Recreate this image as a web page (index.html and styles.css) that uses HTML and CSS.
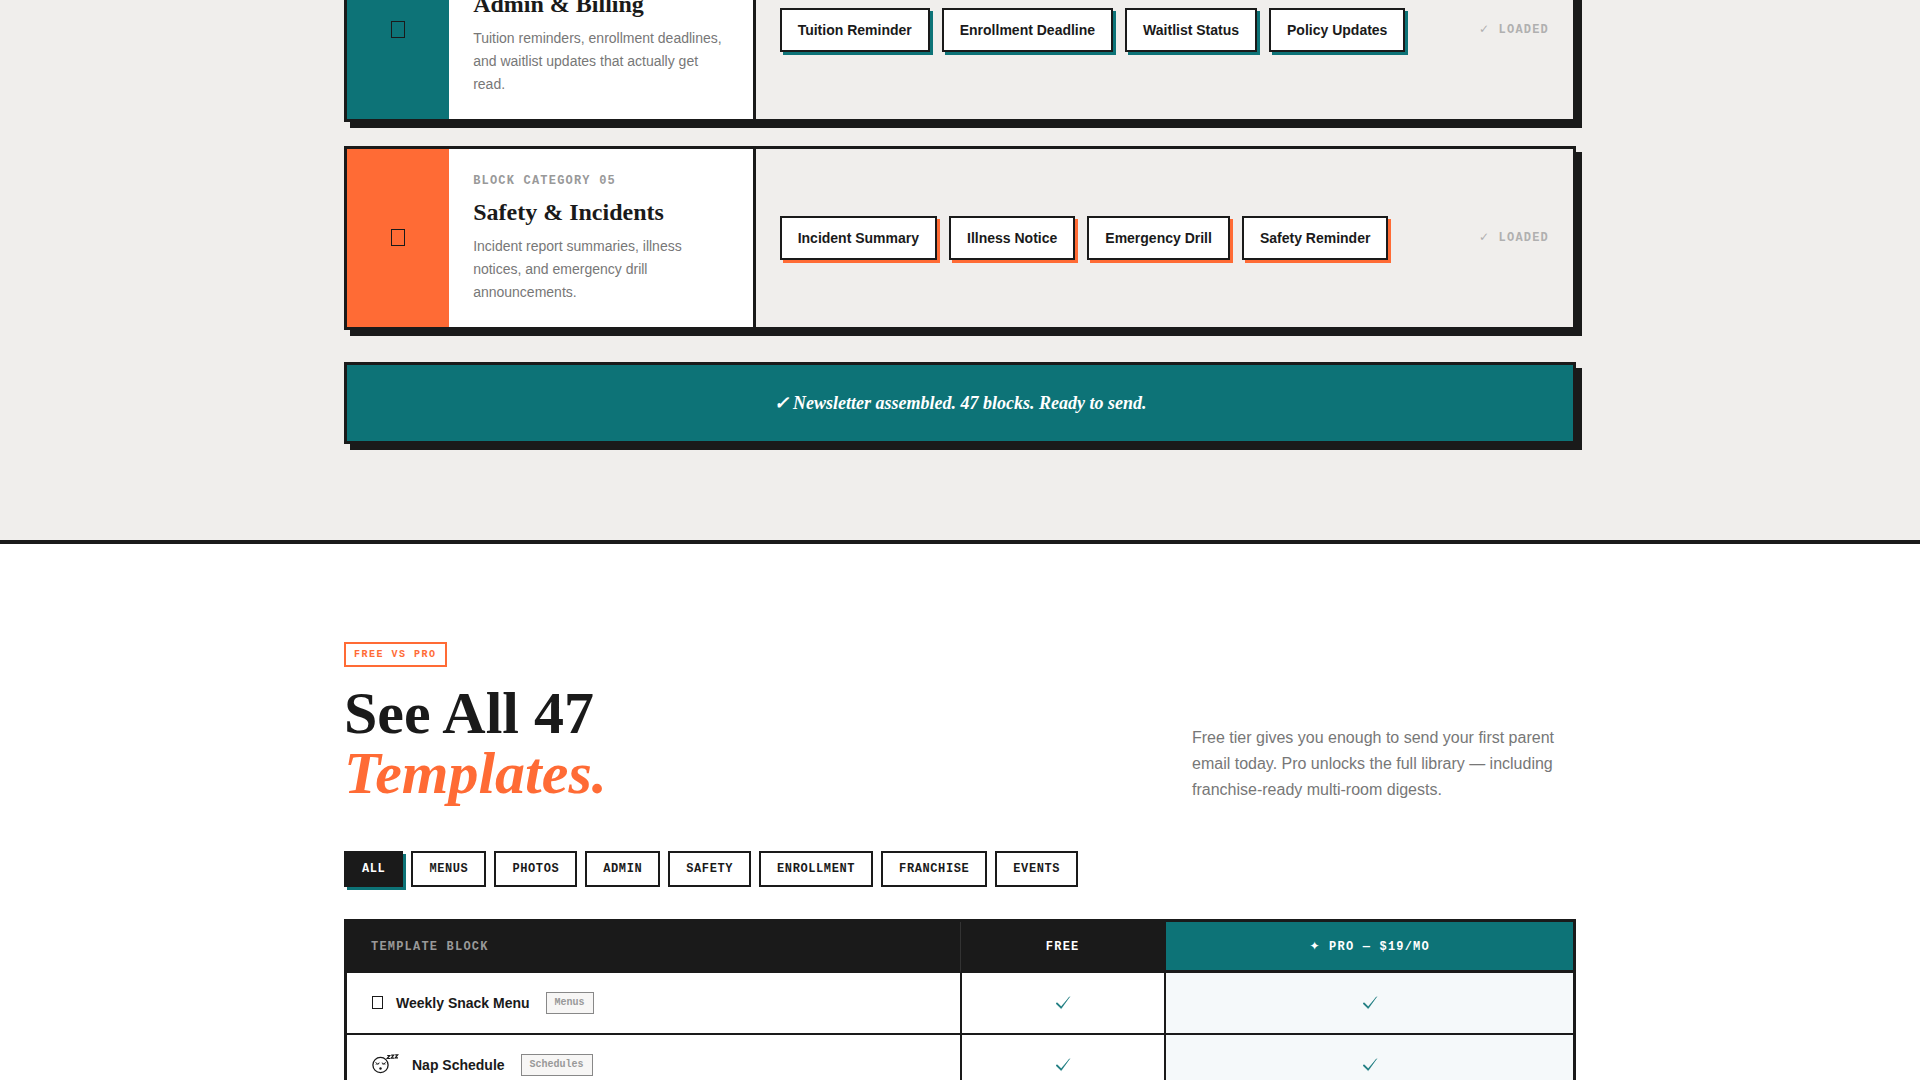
FILE: index.html
```html
<!DOCTYPE html>
<html lang="en">
<head>
<meta charset="utf-8">
<meta name="viewport" content="width=device-width, initial-scale=1">
<title>Newsletter Blocks</title>
<link rel="stylesheet" href="styles.css">
</head>
<body>
<section class="blocks">
  <div class="container">
    <div class="block-list">
      <article class="block block-teal">
        <div class="block-icon"><svg width="14" height="18" viewBox="0 0 14 18" aria-hidden="true"><rect x="0.5" y="0.5" width="13" height="16" fill="none" stroke="currentColor"/></svg></div>
        <div class="block-info">
          <p class="block-label">Block Category 04</p>
          <h3 class="block-title">Admin &amp; Billing</h3>
          <p class="block-desc">Tuition reminders, enrollment deadlines, and waitlist updates that actually get read.</p>
        </div>
        <div class="block-body">
          <ul class="chips">
            <li class="chip">Tuition Reminder</li>
            <li class="chip">Enrollment Deadline</li>
            <li class="chip">Waitlist Status</li>
            <li class="chip">Policy Updates</li>
          </ul>
          <span class="loaded"><span class="sym">✓</span> Loaded</span>
        </div>
      </article>
      <article class="block block-orange">
        <div class="block-icon"><svg width="14" height="18" viewBox="0 0 14 18" aria-hidden="true"><rect x="0.5" y="0.5" width="13" height="16" fill="none" stroke="currentColor"/></svg></div>
        <div class="block-info">
          <p class="block-label">Block Category 05</p>
          <h3 class="block-title">Safety &amp; Incidents</h3>
          <p class="block-desc">Incident report summaries, illness notices, and emergency drill announcements.</p>
        </div>
        <div class="block-body">
          <ul class="chips">
            <li class="chip">Incident Summary</li>
            <li class="chip">Illness Notice</li>
            <li class="chip">Emergency Drill</li>
            <li class="chip">Safety Reminder</li>
          </ul>
          <span class="loaded"><span class="sym">✓</span> Loaded</span>
        </div>
      </article>
    </div>
    <p class="assembled">✓ Newsletter assembled. 47 blocks. Ready to send.</p>
  </div>
</section>

<section class="templates">
  <div class="container">
    <header class="templates-head">
      <div>
        <span class="eyebrow">Free vs Pro</span>
        <h2 class="headline">See All 47<br><em>Templates.</em></h2>
      </div>
      <p class="lede">Free tier gives you enough to send your first parent email today. Pro unlocks the full library — including franchise-ready multi-room digests.</p>
    </header>
    <div class="filters">
      <button type="button" class="filter active">All</button>
      <button type="button" class="filter">Menus</button>
      <button type="button" class="filter">Photos</button>
      <button type="button" class="filter">Admin</button>
      <button type="button" class="filter">Safety</button>
      <button type="button" class="filter">Enrollment</button>
      <button type="button" class="filter">Franchise</button>
      <button type="button" class="filter">Events</button>
    </div>
    <table class="compare">
      <colgroup><col class="col-name"><col class="col-free"><col class="col-pro"></colgroup>
      <thead>
        <tr><th scope="col" class="th-name">Template Block</th><th scope="col" class="th-free">Free</th><th scope="col" class="th-pro"><span class="sym">✦</span> Pro — $19/mo</th></tr>
      </thead>
      <tbody>
        <tr>
          <td><div class="template"><svg class="template-icon" width="13" height="14" viewBox="0 0 13 14" aria-hidden="true"><rect x="1.5" y="0.5" width="10" height="12" fill="none" stroke="currentColor"/></svg><span class="template-name">Weekly Snack Menu</span><span class="tag">Menus</span></div></td>
          <td class="mark"><svg class="check" width="16" height="14" viewBox="0 0 16 14" role="img" aria-label="Included"><path d="M1 7.500L6.200 12.600L14.700 0.700L6.200 10.800L2.200 6.700Z" fill="currentColor" stroke="currentColor" stroke-width=".5"/></svg></td>
          <td class="mark pro"><svg class="check" width="16" height="14" viewBox="0 0 16 14" role="img" aria-label="Included"><path d="M1 7.500L6.200 12.600L14.700 0.700L6.200 10.800L2.200 6.700Z" fill="currentColor" stroke="currentColor" stroke-width=".5"/></svg></td>
        </tr>
        <tr>
          <td><div class="template"><svg class="template-icon" width="29" height="22" viewBox="0 0 29 22" fill="none" stroke="currentColor" aria-hidden="true"><circle cx="9.500" cy="11" r="7.600" stroke-width="1.300"/><path d="M4.500 8.500q2 2.600 4 .4M10.800 8.900q2 2.200 4-.4"/><path d="M5 10.800l.4-1M7 10.800l-.2-1M12 10.800l.2-1M14 10.800l-.4-1" stroke-width=".8"/><circle cx="9.500" cy="14.500" r="1.200" fill="currentColor" stroke="none"/><path d="M16.200 1.500h2.500l-2.500 3h2.800M20.200 1.200h2.500l-2.500 3h2.800M24.200 .9h2.500l-2.500 3h2.800" stroke-width="1.200"/></svg><span class="template-name">Nap Schedule</span><span class="tag">Schedules</span></div></td>
          <td class="mark"><svg class="check" width="16" height="14" viewBox="0 0 16 14" role="img" aria-label="Included"><path d="M1 7.500L6.200 12.600L14.700 0.700L6.200 10.800L2.200 6.700Z" fill="currentColor" stroke="currentColor" stroke-width=".5"/></svg></td>
          <td class="mark pro"><svg class="check" width="16" height="14" viewBox="0 0 16 14" role="img" aria-label="Included"><path d="M1 7.500L6.200 12.600L14.700 0.700L6.200 10.800L2.200 6.700Z" fill="currentColor" stroke="currentColor" stroke-width=".5"/></svg></td>
        </tr>
      </tbody>
    </table>
  </div>
</section>
</body>
</html>
```
FILE: styles.css
```css
:root {
  --ink: #1a1a1a;
  --teal: #0d7377;
  --orange: #ff6b35;
  --paper: #f0eeec;
  --sans: "Liberation Sans", Arial, sans-serif;
  --serif: "Liberation Serif", "Times New Roman", serif;
  --mono: "Liberation Mono", "Courier New", monospace;
}

* { box-sizing: border-box; margin: 0; padding: 0; }

html { scrollbar-width: none; }

body {
  font-family: var(--sans);
  font-size: 16px;
  color: var(--ink);
  background: #fff;
  overflow-x: hidden;
}

.container {
  max-width: 1280px;
  margin: 0 auto;
  padding: 0 24px;
}

.blocks {
  background: var(--paper);
  border-bottom: 4px solid var(--ink);
  padding-bottom: 96px;
  overflow: hidden;
}

.block-list {
  display: grid;
  gap: 24px;
  margin-top: -62px;
}

.block {
  display: grid;
  grid-template-columns: 1fr 3fr 8fr;
  border: 3px solid var(--ink);
  box-shadow: 6px 6px 0 var(--ink);
}

.block-teal { --accent: var(--teal); }
.block-orange { --accent: var(--orange); }

.block-icon {
  display: flex;
  align-items: center;
  justify-content: center;
  background: var(--accent);
}

.block-info {
  background: #fff;
  border-right: 3px solid var(--ink);
  padding: 24px 24px 23px;
}

.block-label {
  font: bold 12px/16px var(--mono);
  letter-spacing: 0.1em;
  text-transform: uppercase;
  color: #999;
  margin-bottom: 8px;
}

.block-title {
  font: bold 24px/30px var(--serif);
  margin-bottom: 8px;
}

.block-desc {
  font-size: 14px;
  line-height: 23px;
  color: #777;
}

.block-body {
  display: flex;
  align-items: center;
  justify-content: space-between;
  gap: 24px;
  padding: 24px;
}

.chips {
  display: flex;
  flex-wrap: wrap;
  gap: 12px;
  list-style: none;
}

.chip {
  background: #fff;
  border: 2px solid var(--ink);
  box-shadow: 3px 3px 0 var(--accent);
  padding: 10px 16px;
  font-size: 14px;
  font-weight: bold;
  line-height: 20px;
}

.sym {
  font-family: "DejaVu Sans", sans-serif;
  line-height: 1;
}

.loaded {
  font: bold 12px/16px var(--mono);
  letter-spacing: 0.1em;
  text-transform: uppercase;
  white-space: nowrap;
  color: #b0b0b0;
}

.assembled {
  margin-top: 32px;
  padding: 24px;
  background: var(--teal);
  border: 3px solid var(--ink);
  box-shadow: 6px 6px 0 var(--ink);
  font: italic bold 18px/28px var(--serif);
  text-align: center;
  color: #fff;
}

.templates { padding: 98px 0 96px; }

.templates-head {
  display: flex;
  align-items: flex-end;
  justify-content: space-between;
  gap: 48px;
  margin-bottom: 48px;
}

.eyebrow {
  display: inline-block;
  border: 2px solid var(--orange);
  padding: 4px 8px;
  font: bold 10px/13px var(--mono);
  letter-spacing: 0.15em;
  text-transform: uppercase;
  color: var(--orange);
  margin-bottom: 16px;
}

.headline { font: bold 60px/60px var(--serif); }
.headline em { color: var(--orange); }

.lede {
  width: 384px;
  line-height: 26px;
  color: #777;
}

.filters {
  display: flex;
  flex-wrap: wrap;
  gap: 8px;
  margin-bottom: 32px;
}

.filter {
  background: #fff;
  border: 2px solid var(--ink);
  padding: 8px 16px;
  font: bold 12px/16px var(--mono);
  letter-spacing: 0.05em;
  text-transform: uppercase;
  color: var(--ink);
  cursor: pointer;
}

.filter.active {
  background: var(--ink);
  color: #fff;
  box-shadow: 3px 3px 0 var(--teal);
}

.compare {
  width: 100%;
  table-layout: fixed;
  border: 3px solid var(--ink);
  border-spacing: 0;
}

.col-name { width: 50%; }
.col-free { width: 16.6667%; }

.compare th {
  background: var(--ink);
  border-bottom: 3px solid var(--ink);
  padding: 17px 24px 15px;
  font: bold 12px/16px var(--mono);
  letter-spacing: 0.1em;
  text-transform: uppercase;
  color: #fff;
}

.compare .th-name { text-align: left; color: #999; }
.compare .th-free { border-left: 1px solid #333; }
.compare .th-pro { background: var(--teal); border-left: 2px solid var(--ink); }

.compare td {
  height: 62px;
  padding: 0 24px;
  border-bottom: 2px solid var(--ink);
}

.compare .mark {
  border-left: 2px solid var(--ink);
  text-align: center;
  color: var(--teal);
}

.check { display: block; margin: 0 auto; }

.compare .pro { background: #f5f9fa; }

.template { display: flex; align-items: center; }
.template-icon { margin-right: 12px; }
.template-name { font-size: 14px; font-weight: bold; margin-right: 16px; }

.tag {
  background: #f7f6f5;
  border: 1px solid #888;
  padding: 2px 8px;
  font: bold 10px/16px var(--mono);
  color: #999;
}
```
